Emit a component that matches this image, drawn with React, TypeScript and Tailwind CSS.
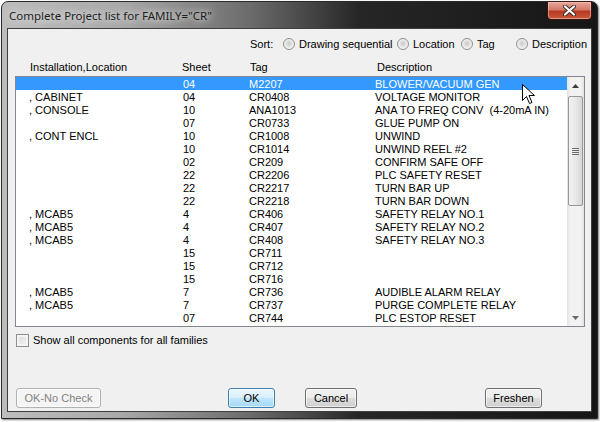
import React from "react";

type Row = { loc: string; sheet: string; tag: string; desc: string };

const rows: Row[] = [
  { loc: "", sheet: "04", tag: "M2207", desc: "BLOWER/VACUUM GEN" },
  { loc: ", CABINET", sheet: "04", tag: "CR0408", desc: "VOLTAGE MONITOR" },
  { loc: ", CONSOLE", sheet: "10", tag: "ANA1013", desc: "ANA TO FREQ CONV  (4-20mA IN)" },
  { loc: "", sheet: "07", tag: "CR0733", desc: "GLUE PUMP ON" },
  { loc: ", CONT ENCL", sheet: "10", tag: "CR1008", desc: "UNWIND" },
  { loc: "", sheet: "10", tag: "CR1014", desc: "UNWIND REEL #2" },
  { loc: "", sheet: "02", tag: "CR209", desc: "CONFIRM SAFE OFF" },
  { loc: "", sheet: "22", tag: "CR2206", desc: "PLC SAFETY RESET" },
  { loc: "", sheet: "22", tag: "CR2217", desc: "TURN BAR UP" },
  { loc: "", sheet: "22", tag: "CR2218", desc: "TURN BAR DOWN" },
  { loc: ", MCAB5", sheet: "4", tag: "CR406", desc: "SAFETY RELAY NO.1" },
  { loc: ", MCAB5", sheet: "4", tag: "CR407", desc: "SAFETY RELAY NO.2" },
  { loc: ", MCAB5", sheet: "4", tag: "CR408", desc: "SAFETY RELAY NO.3" },
  { loc: "", sheet: "15", tag: "CR711", desc: "" },
  { loc: "", sheet: "15", tag: "CR712", desc: "" },
  { loc: "", sheet: "15", tag: "CR716", desc: "" },
  { loc: ", MCAB5", sheet: "7", tag: "CR736", desc: "AUDIBLE ALARM RELAY" },
  { loc: ", MCAB5", sheet: "7", tag: "CR737", desc: "PURGE COMPLETE RELAY" },
  { loc: "", sheet: "07", tag: "CR744", desc: "PLC ESTOP RESET" },
];

// Win7 radio button
function Radio({ label, width }: { label: string; width: string }) {
  return (
    <div className={`flex items-center gap-[4px] ${width}`}>
      <span className="w-[12px] h-[12px] rounded-full border border-[#8e8f8f] bg-[radial-gradient(circle_at_50%_45%,#c8c8c8_0%,#e6e6e6_45%,#f6f6f6_75%)] shrink-0" />
      <span>{label}</span>
    </div>
  );
}

function Button({ label, width, disabled, focused }: { label: string; width: string; disabled?: boolean; focused?: boolean }) {
  let cls = "border-[#707070] bg-[linear-gradient(180deg,#f2f2f2_0%,#ebebeb_48%,#dddddd_52%,#cfcfcf_100%)] text-black";
  if (disabled) cls = "border-[#adb2b5] bg-[#f4f4f4] text-[#838383]";
  if (focused) cls = "border-[#3c7fb1] bg-[linear-gradient(180deg,#eaf6fd_0%,#d9f0fc_48%,#bee6fd_52%,#a7d9f5_100%)] text-black";
  return (
    <div className={`${width} h-[20px] rounded-[3px] border flex items-center justify-center shadow-[inset_0_0_0_1px_rgba(255,255,255,0.6)] ${cls}`}>
      {label}
    </div>
  );
}

function ScrollArrow({ down }: { down?: boolean }) {
  return (
    <div className="h-[17px] flex items-center justify-center">
      <svg width="7" height="4" viewBox="0 0 7 4">
        {down ? <path d="M0 0 H7 L3.5 4 Z" fill="#6a6a6a" /> : <path d="M0 4 H7 L3.5 0 Z" fill="#3c3c3c" />}
      </svg>
    </div>
  );
}

export default function App() {
  return (
    <div className="w-[600px] h-[422px] bg-white p-[1px] font-['Liberation_Sans',Arial,sans-serif] text-[11px] text-black relative">
      {/* window frame */}
      <div className="w-[597px] h-[418px] rounded-t-[7px] border border-[#2a2a2a] bg-[linear-gradient(90deg,#bdbdbd_0%,#a9a9a9_20%,#6a6a6a_42%,#262626_60%,#161616_100%)] flex flex-col px-[5px] pb-[6px] shadow-[1px_1px_2px_rgba(0,0,0,0.5)]">
        {/* title bar */}
        <div className="h-[26px] flex items-start justify-between">
          <div className="pt-[5px] pl-[2px] font-['Noto_Sans',sans-serif] text-[11.5px] text-[#1e1e1e] [text-shadow:0_0_6px_#e0e0e0,0_0_10px_#e0e0e0]">
            Complete Project list for FAMILY="CR"
          </div>
          <div className="w-[45px] h-[19px] -mt-[1px] rounded-b-[4px] border border-[#3a1410] bg-[linear-gradient(180deg,#e6a79c_0%,#d47a68_45%,#b53a22_55%,#c85a3c_100%)] flex items-center justify-center shadow-[inset_0_0_0_1px_rgba(255,210,200,0.5)]">
            <svg width="13" height="11" viewBox="0 0 13 11">
              <path d="M2 1.5 L11 9.5 M11 1.5 L2 9.5" stroke="#3b2a28" strokeWidth="4" strokeLinecap="round" />
              <path d="M2 1.5 L11 9.5 M11 1.5 L2 9.5" stroke="#ffffff" strokeWidth="2.2" strokeLinecap="round" />
            </svg>
          </div>
        </div>

        {/* client area */}
        <div className="flex-1 border border-[#3f3f3f] bg-[#f0f0f0] flex flex-col">
          {/* sort row */}
          <div className="mt-[8px] h-[14px] flex items-center pl-[242px]">
            <span className="w-[33px]">Sort:</span>
            <Radio label="Drawing sequential" width="w-[114px]" />
            <Radio label="Location" width="w-[64px]" />
            <Radio label="Tag" width="w-[55px]" />
            <Radio label="Description" width="w-[70px]" />
          </div>

          {/* column headers */}
          <div className="mt-[8px] h-[13px] grid grid-cols-[152px_68px_127px_1fr] pl-[22px] items-center">
            <span>Installation,Location</span>
            <span>Sheet</span>
            <span>Tag</span>
            <span>Description</span>
          </div>

          {/* list box */}
          <div className="mt-[4px] ml-[7px] w-[570px] h-[251px] border border-[#828790] bg-white flex">
            <div className="flex-1 flex flex-col">
              {rows.map((r, i) => (
                <div
                  key={i}
                  className={`h-[13px] pt-[1px] leading-[13px] grid grid-cols-[154px_66px_126px_1fr] pl-[13px] overflow-hidden ${i === 0 ? "bg-[#3399ff] text-white" : ""}`}
                >
                  <span>{r.loc}</span>
                  <span>{r.sheet}</span>
                  <span>{r.tag}</span>
                  <span className="whitespace-pre">{r.desc}</span>
                </div>
              ))}
            </div>
            {/* vertical scrollbar */}
            <div className="w-[17px] bg-[linear-gradient(90deg,#e3e3e3_0%,#f2f2f2_20%,#f2f2f2_80%,#e3e3e3_100%)] flex flex-col">
              <ScrollArrow />
              <div className="mx-[1px] mt-[2px] h-[110px] rounded-[2px] border border-[#979797] bg-[linear-gradient(90deg,#f3f3f3_0%,#e8e8e8_50%,#d6d6d6_100%)] flex items-center justify-center">
                <div className="flex flex-col gap-[1px]">
                  <span className="block w-[7px] h-[1px] bg-[#6f6f6f]" />
                  <span className="block w-[7px] h-[1px] bg-[#6f6f6f]" />
                  <span className="block w-[7px] h-[1px] bg-[#6f6f6f]" />
                  <span className="block w-[7px] h-[1px] bg-[#6f6f6f]" />
                </div>
              </div>
              <div className="flex-1" />
              <ScrollArrow down />
            </div>
          </div>

          {/* checkbox */}
          <div className="mt-[6px] ml-[8px] h-[14px] flex items-center gap-[4px]">
            <span className="w-[13px] h-[13px] border border-[#8e8f8f] bg-[linear-gradient(135deg,#dcdcdc_0%,#f4f4f4_100%)] shadow-[inset_0_0_0_2px_#f4f4f4]" />
            <span>Show all components for all families</span>
          </div>

          {/* buttons */}
          <div className="mt-[41px] flex items-center">
            <div className="ml-[8px]">
              <Button label="OK-No Check" width="w-[85px]" disabled />
            </div>
            <div className="ml-[127px]">
              <Button label="OK" width="w-[47px]" focused />
            </div>
            <div className="ml-[30px]">
              <Button label="Cancel" width="w-[52px]" />
            </div>
            <div className="ml-[128px]">
              <Button label="Freshen" width="w-[57px]" />
            </div>
          </div>
        </div>
      </div>

      {/* mouse pointer */}
      <svg className="absolute left-[522px] top-[84px]" width="14" height="21" viewBox="0 0 14 21">
        <path d="M0.5 0.5 L0.5 16.5 L4.5 12.5 L7.5 19.5 L10 18.5 L7 11.5 L12.5 11.5 Z" fill="#ffffff" stroke="#000000" strokeWidth="1" strokeLinejoin="round" />
      </svg>
    </div>
  );
}
